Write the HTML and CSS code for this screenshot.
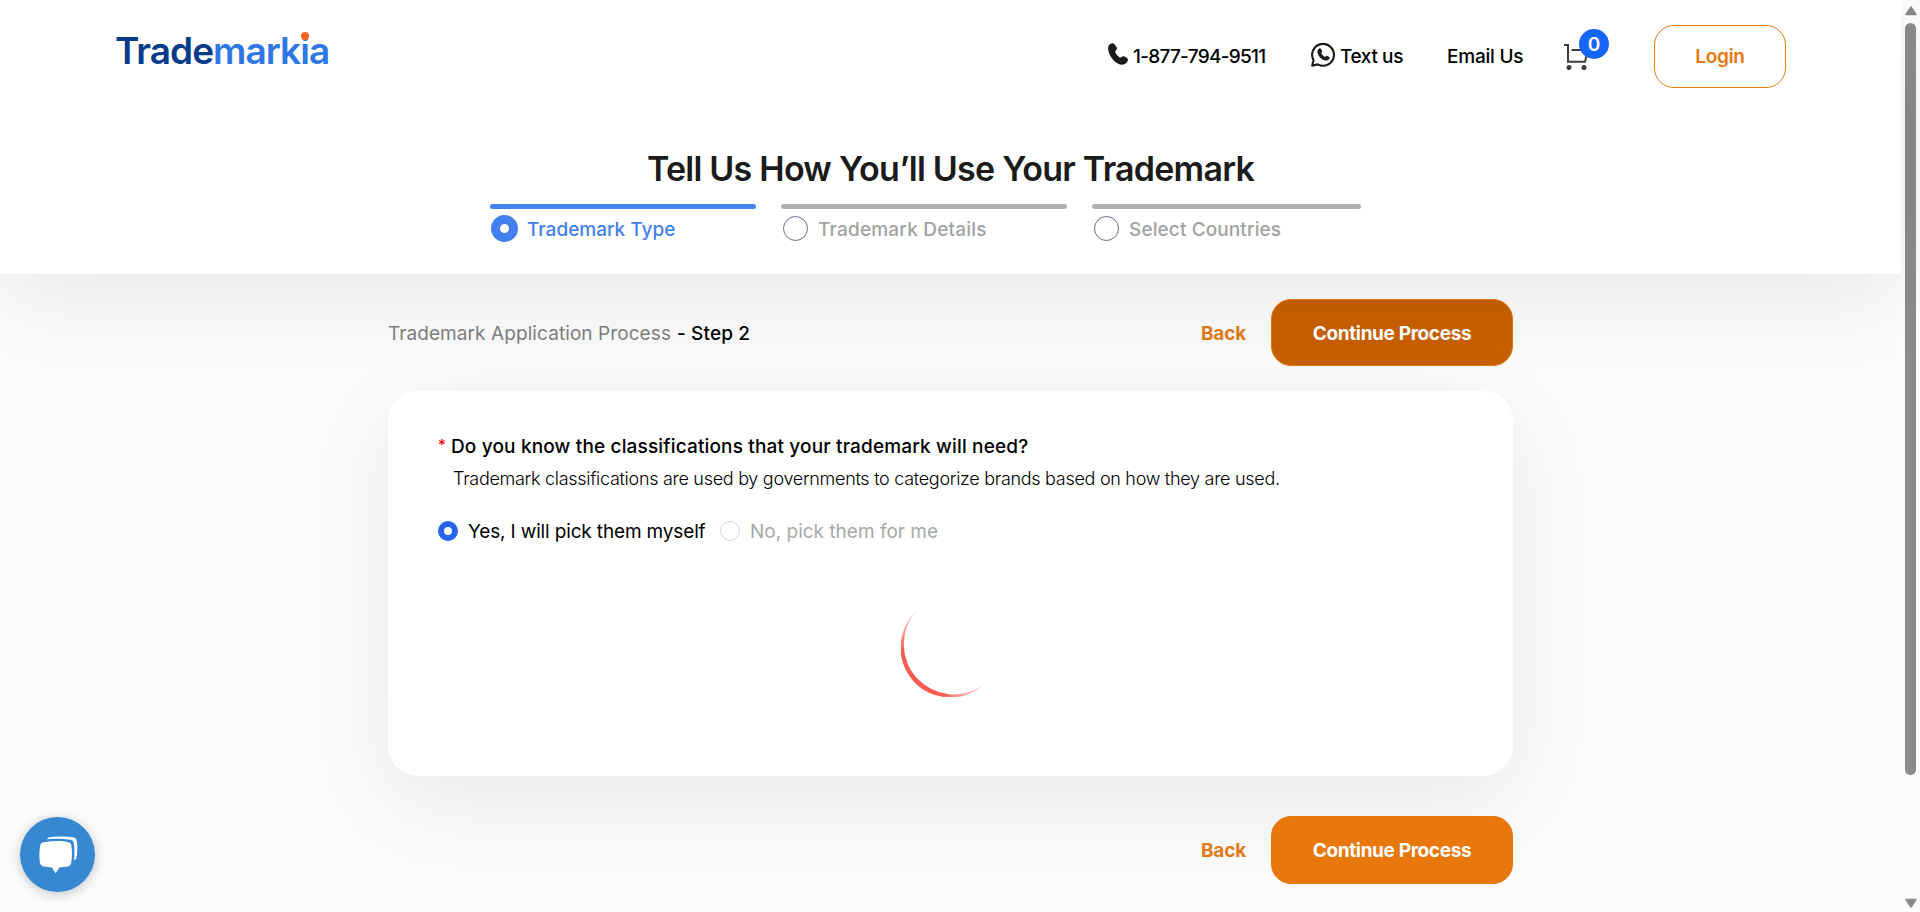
FILE: index.html
```
<!DOCTYPE html>
<html lang="en">
<head>
<meta charset="utf-8">
<title>Trademarkia</title>
<link rel="stylesheet" href="styles.css">
</head>
<body>
<div class="page">
  <header class="header">
    <div class="topbar">
      <a class="logo"><span class="logo-dark">Trade</span><span class="logo-light">mark</span><span class="logo-light logo-i">i<span class="logo-dot"></span></span><span class="logo-light">a</span></a>
      <nav class="nav">
        <a class="nav-item phone">
          <svg class="phone-icon" width="20" height="22" viewBox="0 0 20 22"><path d="M2.2 .9C3.6 -.1 5.6 -.2 6.6 1.2L8.6 4.3C9.3 5.5 8.9 6.6 8 7.4C7 8.3 7 9 7.6 10.1C8.8 12 10 13.3 11.3 14.2C12.1 14.8 12.8 14.6 13.6 13.9C14.5 13.1 15.7 12.9 16.7 13.5L19 15C20.2 15.8 20.2 17.2 19.4 18.4C17.5 21.2 14.6 22.5 11.4 21.3C5.800 18.900 .9 12.700 .1 6.200C-.1 3.800 .6 2 2.200 .9Z" fill="#1b1b1b"/></svg>
          <span class="phone-text">1-877-794-9511</span>
        </a>
        <a class="nav-item textus">
          <svg class="wa-icon" width="25" height="25" viewBox="0 0 25 25"><path d="M2.600 18.300A10.900 10.900 0 1 1 6.800 22.400L1.200 23.600Z" fill="none" stroke="#1b1b1b" stroke-width="2.100" stroke-linejoin="round"/><path d="M8.300 6.500C9.200 6 9.800 6.300 10.200 7.200L11 9C11.300 9.800 10.900 10.200 10.200 11C11 12.900 12.300 14 14.200 14.900C15.100 13.900 15.500 13.600 16.200 13.900L18 14.800C18.800 15.200 18.900 15.700 18.500 16.600C17.700 18.200 15.900 18.900 14.200 18.500C10.300 17.500 7.500 14.700 6.500 10.700C6.200 9 6.800 7.400 8.300 6.500Z" fill="#1b1b1b"/></svg>
          <span class="textus-text">Text us</span>
        </a>
        <a class="nav-item email">Email Us</a>
        <a class="cart">
          <svg width="26" height="26" viewBox="0 0 26 26"><g fill="none" stroke="#3d3d3f" stroke-width="2"><path d="M0 1H4V17.700H21L24 6H7.500"/></g><circle cx="5" cy="23.600" r="2.500" fill="#3d3d3f"/><circle cx="20" cy="23.600" r="2.500" fill="#3d3d3f"/></svg>
          <span class="badge">0</span>
        </a>
        <a class="login">Login</a>
      </nav>
    </div>
    <h1 class="title">Tell Us How You’ll Use Your Trademark</h1>
    <div class="steps">
      <div class="step step-active">
        <div class="step-bar"></div>
        <div class="step-row"><span class="step-dot"></span><span class="step-label label-type">Trademark Type</span></div>
      </div>
      <div class="step step-details">
        <div class="step-bar"></div>
        <div class="step-row"><span class="step-dot"></span><span class="step-label label-details">Trademark Details</span></div>
      </div>
      <div class="step step-countries">
        <div class="step-bar"></div>
        <div class="step-row"><span class="step-dot"></span><span class="step-label label-countries">Select Countries</span></div>
      </div>
    </div>
  </header>
  <main class="main">
    <div class="actions">
      <div class="crumb"><span class="crumb-name">Trademark Application Process</span><span class="crumb-step">- Step 2</span></div>
      <a class="back">Back</a>
      <a class="continue continue-hover">Continue Process</a>
    </div>
    <section class="card">
      <div class="question"><span class="star">*</span><span class="question-text">Do you know the classifications that your trademark will need?</span></div>
      <p class="hint">Trademark classifications are used by governments to categorize brands based on how they are used.</p>
      <div class="options">
        <span class="radio radio-on"></span><span class="option-yes">Yes, I will pick them myself</span>
        <span class="radio"></span><span class="option-no">No, pick them for me</span>
      </div>
      <svg class="spinner" width="100" height="100" viewBox="0 0 100 100"><defs><linearGradient id="fade" x1="16" y1="14" x2="82" y2="88" gradientUnits="userSpaceOnUse"><stop offset="0" stop-color="#f95b50" stop-opacity=".4"/><stop offset=".2" stop-color="#f95b50"/><stop offset=".8" stop-color="#f95b50"/><stop offset="1" stop-color="#f95b50" stop-opacity=".4"/></linearGradient></defs><path d="M15.500 14A49.840 49.840 0 0 0 82.500 87.800A50.120 50.120 0 0 1 15.500 14Z" fill="url(#fade)"/></svg>
    </section>
    <div class="actions actions-bottom">
      <a class="back">Back</a>
      <a class="continue">Continue Process</a>
    </div>
  </main>
</div>
<div class="scrollbar">
  <svg width="12" height="10" viewBox="0 0 12 10"><path d="M6 1L11 8.500H1Z" fill="#8b8b8b" stroke="#8b8b8b" stroke-width="1.500" stroke-linejoin="round"/></svg>
  <div class="thumb"></div>
  <svg class="arrow-down" width="12" height="10" viewBox="0 0 12 10"><path d="M6 9L11 1.500H1Z" fill="#8b8b8b" stroke="#8b8b8b" stroke-width="1.500" stroke-linejoin="round"/></svg>
</div>
<a class="chat">
  <svg width="39" height="38" viewBox="0 0 39 38"><path d="M5 6.200C14 4.700 24 4.700 29.500 6.200C31.300 6.800 32 7.500 32.300 9.200C33.300 15 33.200 21 32.200 27C31.800 29 31 30 29 30.400C26.500 30.900 23.500 31 20.800 31.200L16.500 37.300L12.800 31.200C10 31.100 7.500 31 4.800 30.400C2.500 29.900 1.500 29 1 27C.1 21 .1 15 1.200 9.200C1.600 7.300 2.800 6.500 5 6.200Z" fill="#fff"/><path d="M7.500 3.200L10 1.200C17 .1 27 .1 34 1.300C36.500 1.700 37.300 2.500 37.700 4.500C38.600 10.500 38.500 16.500 37.500 21.500C37.200 23 36.600 23.700 35 24.200C35.600 18.500 35.700 13.500 35 8C34.700 5.300 33.800 4.200 31.500 3.800C23.500 2.500 15.500 2.600 7.500 3.200Z" fill="#fff"/></svg>
</a>
</body>
</html>
```
FILE: styles.css
```
* { box-sizing: border-box; }
body {
  margin: 0;
  height: 912px;
  overflow: hidden;
  display: flex;
  background: #fbfbfb;
  color: #000;
  font: 500 19px/24px Inter, "Open Sans", sans-serif;
}
.page { width: 1901px; }

/* Header */
.header {
  position: relative;
  z-index: 1;
  height: 274px;
  background: #fff;
  box-shadow: 0 24px 94px rgba(0, 0, 0, .075);
}
.topbar {
  height: 113px;
  padding: 0 115px 0 115px;
  display: flex;
  justify-content: space-between;
  align-items: center;
}
.logo {
  margin-bottom: 12px;
  font-size: 37px;
  font-weight: 600;
  line-height: 44px;
  letter-spacing: -.96px;
  white-space: nowrap;
}
.logo-dark { color: #063b89; }
.logo-light { color: #2f77e4; }
.logo-i { position: relative; }
.logo-dot {
  position: absolute;
  left: .5px;
  top: 4px;
  width: 8px;
  height: 8px;
  border-radius: 50%;
  background: #fa6321;
}
.nav { display: flex; align-items: center; white-space: nowrap; }
.nav-item { display: flex; align-items: center; }
.phone { width: 203px; }
.phone-icon { margin: -5px 5px 0 0; }
.phone-text { letter-spacing: -.72px; }
.textus { width: 136px; }
.wa-icon { margin: -5px 4px 0 0; }
.textus-text { letter-spacing: -.4px; }
.email { width: 117px; letter-spacing: -.22px; }
.cart { position: relative; width: 90px; height: 26px; }
.cart svg { display: block; }
.badge {
  position: absolute;
  left: 15px;
  top: -15px;
  width: 30px;
  height: 30px;
  border-radius: 50%;
  background: #1565f8;
  color: #fff;
  font-weight: 600;
  font-size: 19px;
  line-height: 32px;
  text-align: center;
}
.login {
  width: 132px;
  height: 63px;
  border: 1px solid #e8770c;
  border-radius: 20px;
  color: #e8770c;
  font-weight: 600;
  line-height: 61px;
  letter-spacing: -.3px;
  text-align: center;
}
.title {
  margin: 36px 0 0;
  color: #1b1b1b;
  font-size: 34px;
  font-weight: 600;
  line-height: 40px;
  letter-spacing: -.76px;
  text-align: center;
}
.steps { display: flex; padding: 15px 0 0 490px; }
.step { width: 266px; margin-right: 25px; color: #a2a2a2; }
.step-details { width: 286px; }
.step-countries { width: 269px; margin-right: 0; }
.step-bar { height: 5px; border-radius: 3px; background: #b1b1b1; }
.step-row { display: flex; align-items: center; height: 39px; padding-left: 2px; }
.step-label { padding-top: 2px; }
.step-dot {
  width: 25px;
  height: 25px;
  margin-right: 10px;
  border: 1px solid #667085;
  border-radius: 50%;
}
.step-active { color: #4380ee; }
.step-active .step-bar { background: #4380ee; }
.step-active .step-row { padding-left: 1px; }
.step-active .step-dot {
  width: 27px;
  height: 27px;
  margin-right: 9px;
  border: 9px solid #4380ee;
  background: #fff;
}
.label-details { letter-spacing: .2px; }
.label-countries { letter-spacing: .11px; }

/* Main column */
.main { width: 1125px; margin-left: 388px; padding-top: 25px; }
.actions { display: flex; align-items: center; height: 67px; }
.actions-bottom {
  position: relative;
  z-index: 3;
  justify-content: flex-end;
  height: 68px;
  margin-top: 40px;
}
.crumb { margin-right: auto; padding-top: 2px; white-space: nowrap; }
.crumb-name { margin-right: 6px; color: #808080; font-weight: 400; letter-spacing: .08px; }
.crumb-step { letter-spacing: .13px; }
.back { margin-right: 25px; padding-top: 2px; color: #e07b1a; font-weight: 700; letter-spacing: -.2px; }
.continue {
  display: flex;
  align-items: center;
  justify-content: center;
  width: 242px;
  height: 100%;
  padding-top: 2px;
  border: 1px solid #e8770c;
  border-radius: 20px;
  background: #e8770c;
  color: #fff;
  font-weight: 700;
  letter-spacing: -.36px;
}
.continue-hover { background: #c86000; }
.card {
  position: relative;
  z-index: 2;
  height: 385px;
  margin-top: 25px;
  padding: 44px 50px 0;
  border-radius: 30px;
  background: #fff;
  box-shadow: 0 24px 94px rgba(0, 0, 0, .075);
}
.question { display: flex; }
.star { width: 13px; color: #f00; font-size: 15px; line-height: 20px; }
.question-text { letter-spacing: .16px; white-space: nowrap; }
.hint {
  margin: 8px 0 0 15px;
  font-size: 18px;
  font-weight: 300;
  line-height: 24px;
  letter-spacing: -.29px;
  white-space: nowrap;
}
.options { display: flex; align-items: center; height: 24px; margin-top: 28px; font-weight: 400; }
.radio { width: 20px; height: 20px; border: 1px solid #d6d6d6; border-radius: 50%; }
.radio-on { border: 6px solid #2563eb; background: #fff; }
.option-yes { width: 262px; padding: 2px 0 0 10px; letter-spacing: -.15px; white-space: nowrap; }
.option-no { padding: 2px 0 0 10px; color: #a8a8a8; white-space: nowrap; }
.spinner { display: block; margin: 54px 0 0 463px; }

/* Page scrollbar */
.scrollbar {
  width: 19px;
  height: 912px;
  padding: 6px 0 4px;
  display: flex;
  flex-direction: column;
  align-items: center;
  background: #fcfcfc;
}
.thumb { width: 11px; height: 752px; margin-top: 7px; border-radius: 6px; background: #8b8b8b; }
.arrow-down { margin-top: auto; }

/* Floating chat launcher */
.chat {
  position: absolute;
  left: 20px;
  top: 817px;
  width: 75px;
  height: 75px;
  padding-left: 1px;
  border-radius: 50%;
  background: #3788d2;
  box-shadow: 0 2px 12px rgba(0, 0, 0, .22);
  display: flex;
  align-items: center;
  justify-content: center;
}
```
